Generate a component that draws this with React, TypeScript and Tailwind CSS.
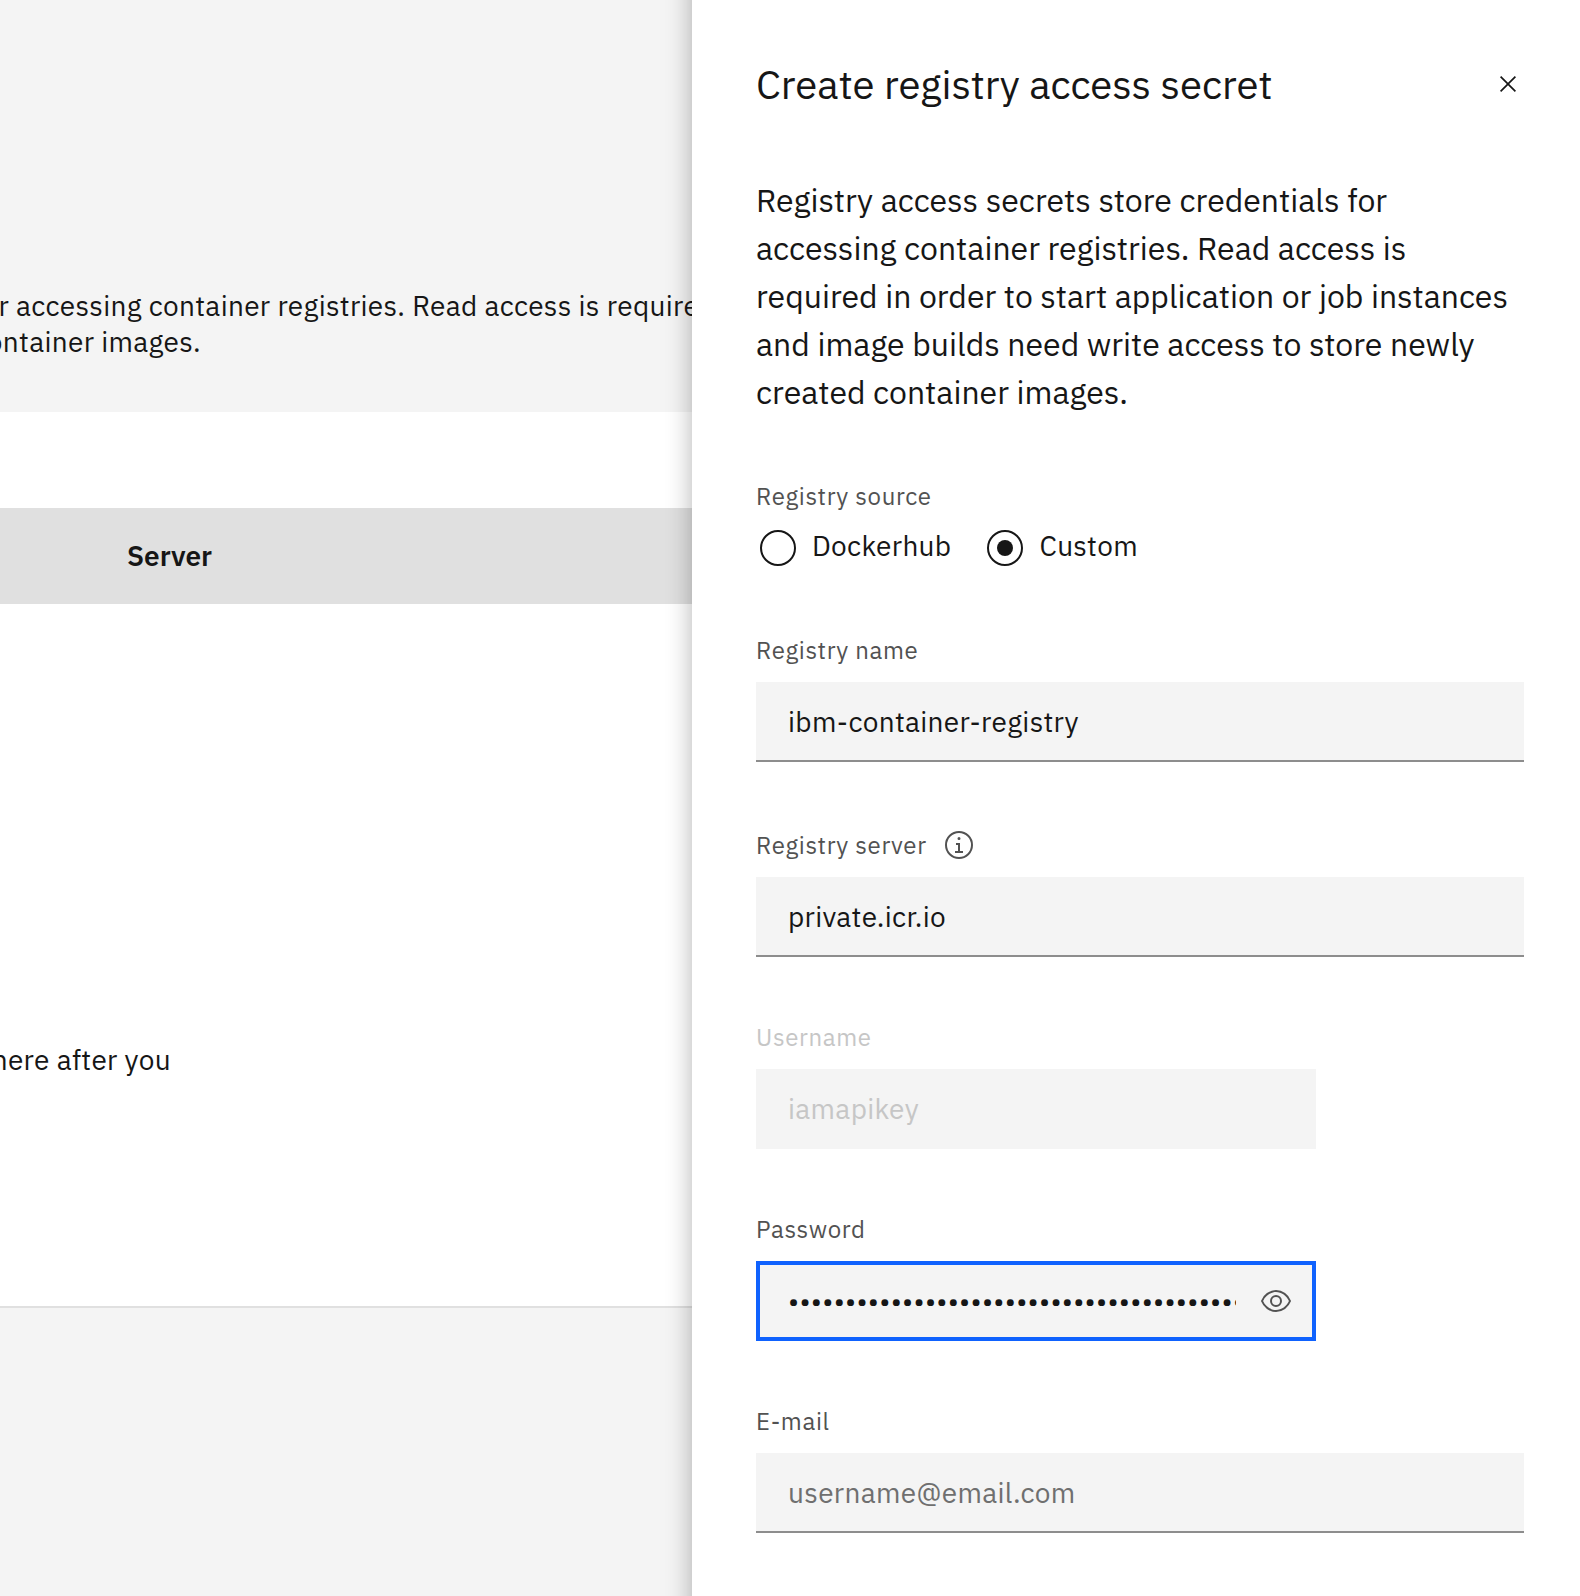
import type { ReactNode } from "react";

const description = [
  "Registry access secrets store credentials for",
  "accessing container registries. Read access is",
  "required in order to start application or job instances",
  "and image builds need write access to store newly",
  "created container images.",
];

function CloseIcon() {
  return (
    <svg viewBox="0 0 32 32" className="size-8" fill="#161616">
      <path d="M24 9.2 22.8 8 16 14.8 9.2 8 8 9.2 14.8 16 8 22.8 9.2 24 16 17.2 22.8 24 24 22.8 17.2 16 24 9.2z" />
    </svg>
  );
}

function InfoIcon() {
  return (
    <svg viewBox="0 0 32 32" className="size-8" fill="#525252">
      <path d="M17 22v-8h-4v2h2v6h-3v2h8v-2h-3zM16 8a1.5 1.5 0 1 0 1.5 1.5A1.5 1.5 0 0 0 16 8z" />
      <path d="M16 30a14 14 0 1 1 14-14 14 14 0 0 1-14 14zm0-26a12 12 0 1 0 12 12A12 12 0 0 0 16 4z" />
    </svg>
  );
}

function EyeIcon() {
  return (
    <svg viewBox="0 0 32 32" className="size-8" fill="#525252">
      <path d="M30.94 15.66A16.69 16.69 0 0 0 16 5 16.69 16.69 0 0 0 1.06 15.66a1 1 0 0 0 0 .68A16.69 16.69 0 0 0 16 27a16.69 16.69 0 0 0 14.94-10.66 1 1 0 0 0 0-.68zM16 25c-5.3 0-10.9-3.93-12.93-9C5.1 10.93 10.7 7 16 7s10.9 3.93 12.93 9C26.9 21.07 21.3 25 16 25z" />
      <path d="M16 10a6 6 0 1 0 6 6 6 6 0 0 0-6-6zm0 10a4 4 0 1 1 4-4 4 4 0 0 1-4 4z" />
    </svg>
  );
}

function Radio({ label, checked }: { label: string; checked?: boolean }) {
  return (
    <div className="flex items-center">
      <div className="flex size-9 items-center justify-center rounded-full border-2 border-[#161616]">
        {checked && <div className="size-4 rounded-full bg-[#161616]" />}
      </div>
      <span className="-mt-1 ml-4 text-[28px] leading-9 tracking-[0.32px]">{label}</span>
    </div>
  );
}

function Field({
  label,
  labelClass = "text-[#525252]",
  boxClass,
  className,
  icon,
  children,
}: {
  label: string;
  labelClass?: string;
  boxClass: string;
  className: string;
  icon?: ReactNode;
  children: ReactNode;
}) {
  return (
    <div className={className}>
      <div className="mb-4 flex h-8 items-center gap-4 whitespace-nowrap text-2xl leading-8 tracking-[0.64px]">
        <span className={labelClass}>{label}</span>
        {icon}
      </div>
      <div
        className={`flex h-20 items-center whitespace-nowrap bg-[#f4f4f4] text-[28px] leading-9 tracking-[0.32px] ${boxClass}`}
      >
        {children}
      </div>
    </div>
  );
}

export default function App() {
  return (
    <div className="flex h-[1596px] w-[1580px] overflow-hidden bg-white font-['IBM_Plex_Sans','Open_Sans',sans-serif] text-[#161616]">
      <main className="flex w-[692px] shrink-0 flex-col overflow-hidden text-[28px] leading-9 tracking-[0.32px]">
        <header className="h-[412px] bg-[#f4f4f4] pt-72">
          <div className="flex whitespace-pre">
            <span className="flex w-4 shrink-0 justify-end">for </span>
            <span>accessing container registries. Read access is required</span>
          </div>
          <div className="flex w-[201px] justify-end whitespace-pre">container images.</div>
        </header>
        <div className="mt-24 flex h-24 items-center bg-[#e0e0e0] pl-[127px] font-semibold tracking-normal">Server</div>
        <div className="mt-[438px] flex w-[171px] justify-end whitespace-pre">here after you</div>
        <div className="mt-auto h-[290px] border-t-2 border-[#e0e0e0] bg-[#f4f4f4]" />
      </main>

      <aside className="relative -my-8 flex w-[888px] shrink-0 flex-col bg-white py-8 pl-16 pr-14 shadow-[0_0_24px_rgba(0,0,0,0.3)]">
        <div className="flex items-center justify-between pt-[59px]">
          <h1 className="whitespace-nowrap text-[40px] leading-[50px]">Create registry access secret</h1>
          <CloseIcon />
        </div>

        <div className="mt-[67px] text-[32px] leading-[48px]">
          {description.map((line) => (
            <div key={line} className="whitespace-nowrap">
              {line}
            </div>
          ))}
        </div>

        <div className="mt-16">
          <div className="text-2xl leading-8 tracking-[0.64px] text-[#525252]">Registry source</div>
          <div className="mt-[18px] flex h-9 gap-9 pl-1">
            <Radio label="Dockerhub" />
            <Radio label="Custom" checked />
          </div>
        </div>

        <Field className="mt-[68px]" label="Registry name" boxClass="border-b-2 border-[#8d8d8d] pl-8 pt-0.5">
          ibm-container-registry
        </Field>

        <Field
          className="mt-[67px]"
          label="Registry server"
          boxClass="border-b-2 border-[#8d8d8d] pl-8 pt-0.5"
          icon={<InfoIcon />}
        >
          private.icr.io
        </Field>

        <Field
          className="mt-16"
          label="Username"
          labelClass="text-[#c6c6c6]"
          boxClass="w-[560px] pl-8 text-[#c6c6c6]"
        >
          iamapikey
        </Field>

        <Field
          className="mt-16"
          label="Password"
          boxClass="w-[560px] justify-between border-4 border-[#0f62fe] pl-7 pr-5"
        >
          <span className="w-[448px] overflow-hidden">{"•".repeat(41)}</span>
          <EyeIcon />
        </Field>

        <Field className="mt-16" label="E-mail" boxClass="border-b-2 border-[#8d8d8d] pl-8 pt-0.5 text-[#6f6f6f]">
          username@email.com
        </Field>
      </aside>
    </div>
  );
}
